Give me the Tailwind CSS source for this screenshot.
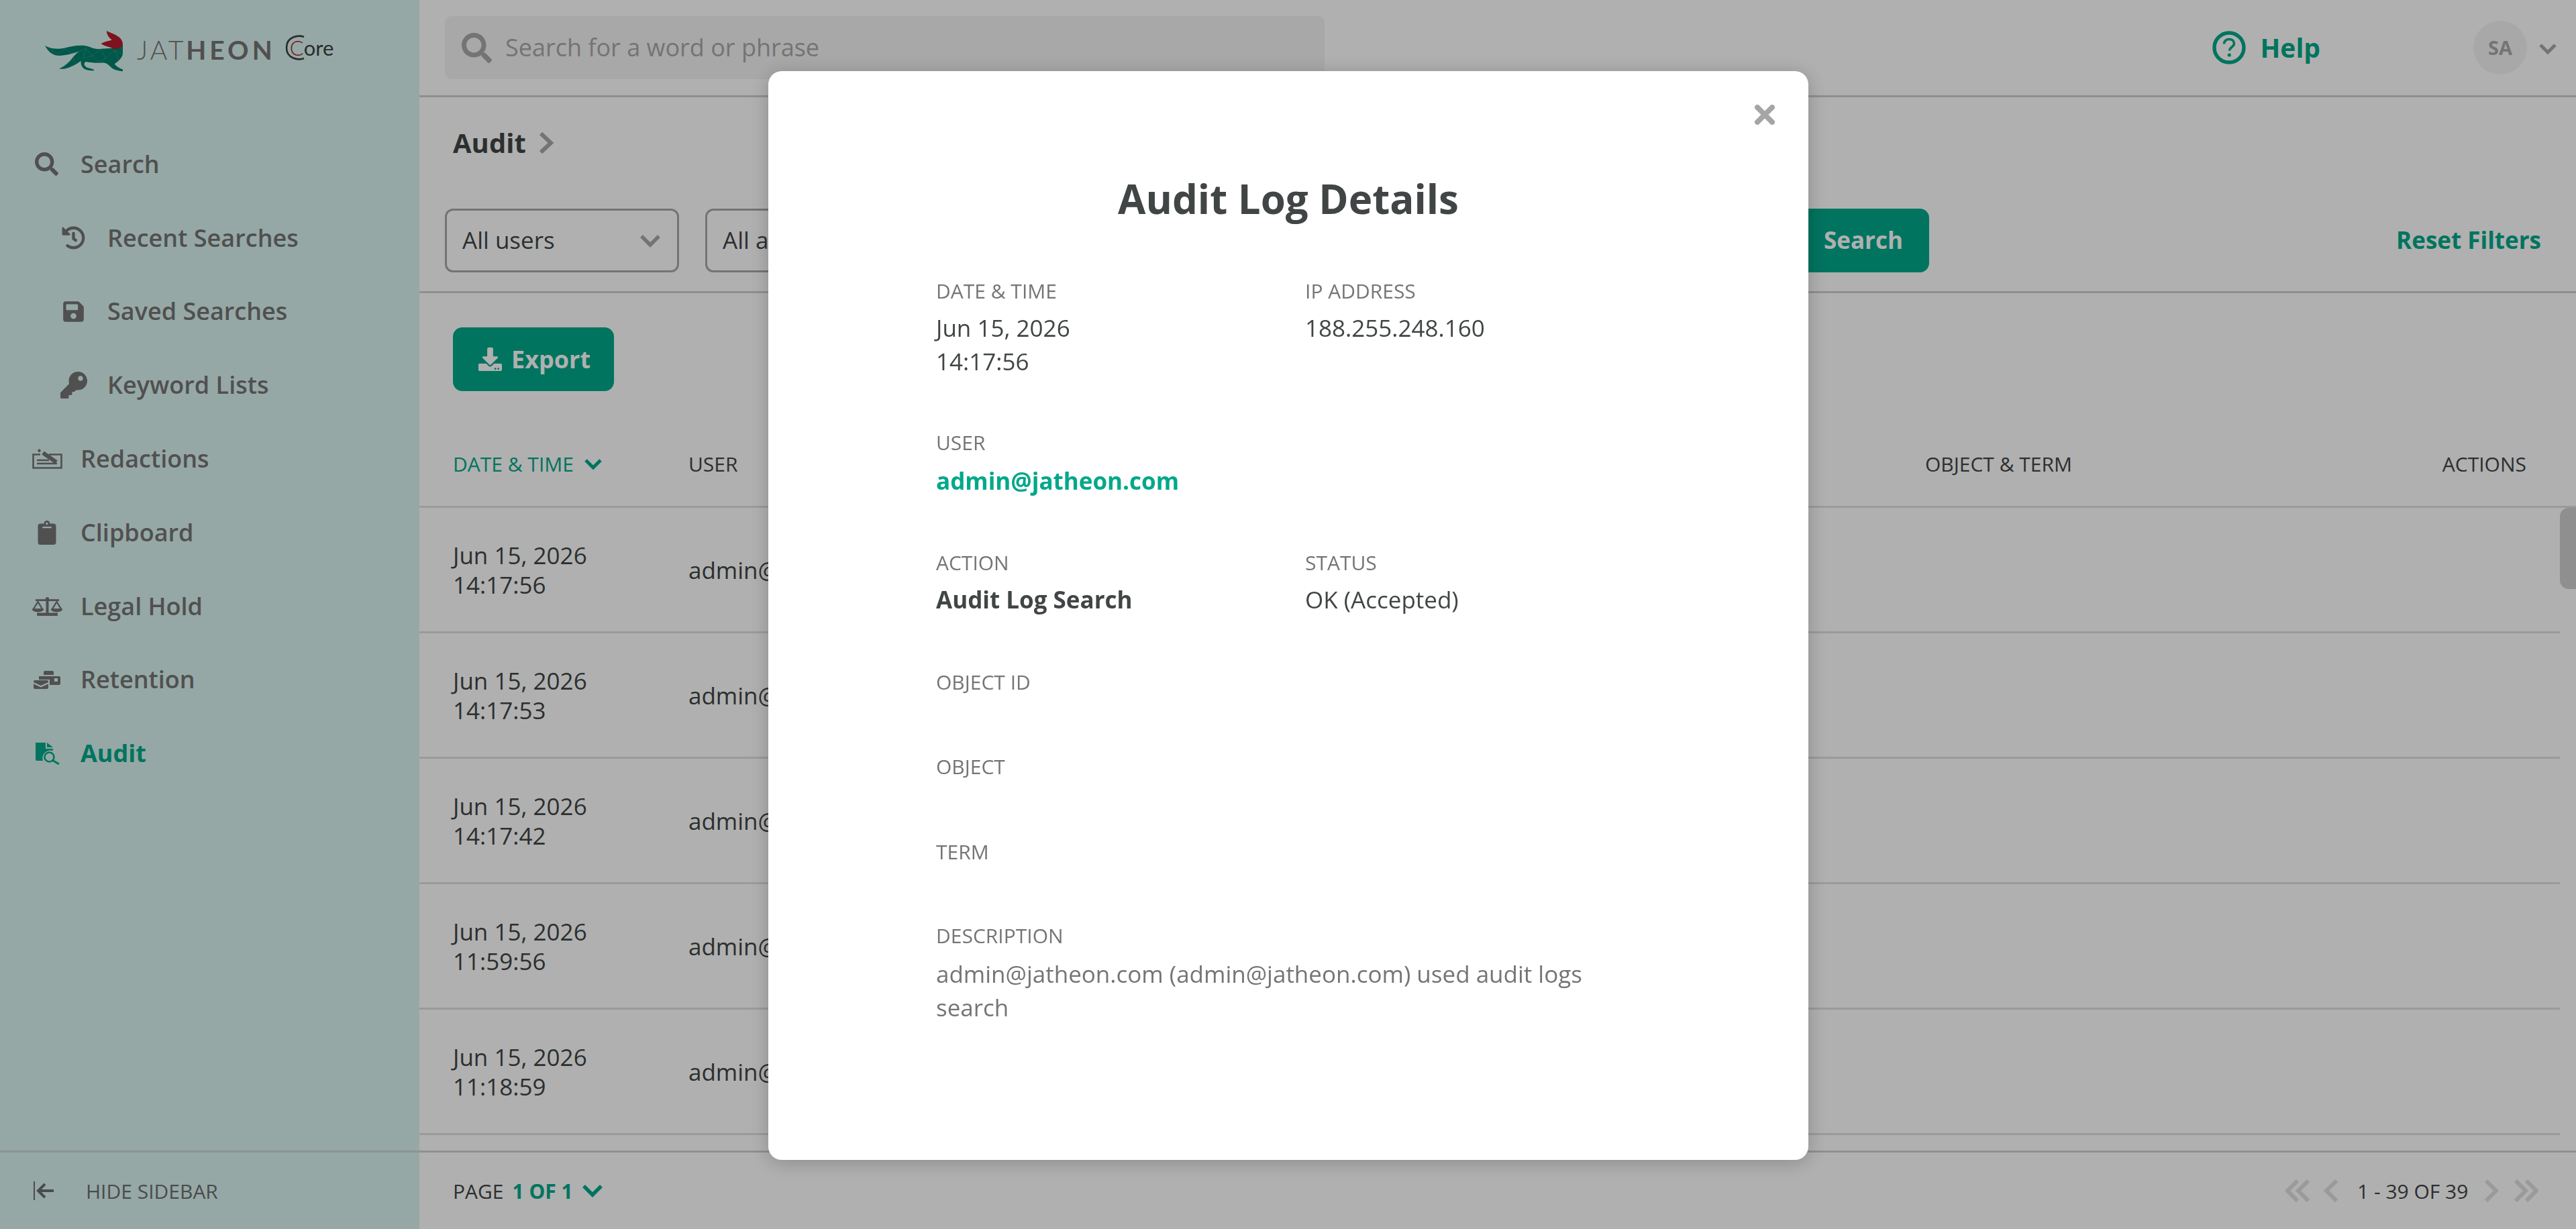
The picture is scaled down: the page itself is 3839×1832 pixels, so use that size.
<!DOCTYPE html>
<html lang="en">
<head>
    <meta charset="UTF-8">
    <title>Audit Log Details</title>
    <script src="https://cdn.jsdelivr.net/npm/@tailwindcss/browser@4"></script>
</head>
<body class="w-[3839px] h-[1832px] overflow-hidden bg-white font-['Open_Sans',sans-serif] text-[#414545]">
<div class="flex w-full h-full">
    <!-- Sidebar -->
    <aside class="w-[625px] h-full flex flex-col bg-[#daf3f0] text-[#757575]">
        <div class="h-[145px] pt-[46px] pl-[67px] flex items-start">
            <svg class="w-[117px] h-[61px]" viewBox="80 48 350 182">
                <path fill="#00806c" d="M80 113C95 125 130 132 165 125C195 118 225 110 260 114C285 118 300 132 330 128C365 124 400 128 427 112L427 150C424 170 405 185 390 195C400 208 415 215 427 220L427 228C405 226 385 222 372 208C362 196 350 188 335 190C310 192 280 188 262 185C250 192 255 205 270 212C285 215 298 218 300 224C285 226 265 224 252 215C240 205 240 190 240 182C225 195 205 205 185 212C170 217 155 218 142 217C160 210 180 195 195 178C205 165 215 152 232 140C200 150 165 160 135 158C110 155 90 135 80 113Z"/>
                <path fill="none" stroke="#8fc4b8" stroke-width="1.5" opacity=".55" d="M100 130L140 150L170 128L200 150L232 140L262 125L290 160L330 128L350 170L390 135L410 175M262 125L250 170L290 160L320 188M350 170L320 188M200 150L215 190M390 135L427 150"/>
                <path fill="#b51c2c" d="M355 48C375 58 400 65 415 80C425 90 428 105 427 112C420 122 400 132 385 128C378 120 350 118 330 105C345 95 370 92 378 88C365 78 355 65 355 48Z"/>
            </svg>
            <div class="ml-[20px] mt-[6px] flex items-baseline font-['Lato',sans-serif] text-[39px] leading-[44px] tracking-[4px] text-[#757575]">
                <span class="font-light">JAT</span><span class="font-bold tracking-[5px]">HEON</span>
            </div>
            <div class="relative ml-[14px] mt-[6px] w-[69px] h-[38px]">
                <svg class="absolute left-0 top-[0px] w-[30px] h-[38px]" viewBox="0 0 30 38"><path d="M28 3C20 0 2 2 2 19C2 36 20 38 28 35" fill="none" stroke="#3a4140" stroke-width="2.6"/></svg>
                <span class="absolute left-[7px] top-[-1px] font-['Lato',sans-serif] text-[31px] leading-[40px] text-[#3a4140]"><span class="text-[#b51c2c] font-light">C</span>ore</span>
            </div>
        </div>
        <nav class="flex-1 pt-[45px] text-[36px] font-semibold">
            <a class="h-[109.8px] flex items-center pl-[52px] gap-[33px]">
                <svg class="w-[35px] h-[35px]" viewBox="0 0 512 512" fill="currentColor"><path d="M505 442.7L405.3 343c-4.5-4.5-10.6-7-17-7H372c27.6-35.3 44-79.7 44-128C416 93.1 322.9 0 208 0S0 93.1 0 208s93.1 208 208 208c48.3 0 92.7-16.4 128-44v16.3c0 6.4 2.5 12.5 7 17l99.7 99.7c9.4 9.4 24.6 9.4 33.9 0l28.3-28.3c9.4-9.4 9.4-24.6.1-34zM208 336c-70.7 0-128-57.2-128-128 0-70.7 57.2-128 128-128 70.7 0 128 57.2 128 128 0 70.7-57.2 128-128 128z"/></svg>
                <span>Search</span>
            </a>
            <a class="h-[109.8px] flex items-center pl-[92px] gap-[33px]">
                <svg class="w-[35px] h-[35px]" viewBox="0 0 512 512" fill="currentColor"><path d="M504 255.531c.253 136.64-111.18 248.372-247.82 248.468-59.015.042-113.223-20.53-155.822-54.911-11.077-8.94-11.905-25.541-1.839-35.607l11.267-11.267c8.609-8.609 22.353-9.551 31.891-1.984C173.062 425.135 212.781 440 256 440c101.705 0 184-82.311 184-184 0-101.705-82.311-184-184-184-48.814 0-93.149 18.969-126.068 49.932l50.754 50.754c10.08 10.08 2.941 27.314-11.313 27.314H24c-8.837 0-16-7.163-16-16V38.627c0-14.254 17.234-21.393 27.314-11.314l49.372 49.372C129.209 34.136 189.552 8 256 8c136.81 0 247.747 110.78 248 247.531zm-180.912 78.784l9.823-12.63c8.138-10.463 6.253-25.542-4.21-33.679L288 256.349V152c0-13.255-10.745-24-24-24h-16c-13.255 0-24 10.745-24 24v135.651l65.409 50.874c10.463 8.137 25.541 6.253 33.679-4.21z"/></svg>
                <span>Recent Searches</span>
            </a>
            <a class="h-[109.8px] flex items-center pl-[92px] gap-[33px]">
                <svg class="w-[35px] h-[35px]" viewBox="0 0 448 512" fill="currentColor"><path d="M433.941 129.941l-83.882-83.882A48 48 0 0 0 316.118 32H48C21.49 32 0 53.49 0 80v352c0 26.51 21.49 48 48 48h352c26.51 0 48-21.49 48-48V163.882a48 48 0 0 0-14.059-33.941zM224 416c-35.346 0-64-28.654-64-64 0-35.346 28.654-64 64-64s64 28.654 64 64c0 35.346-28.654 64-64 64zm96-304.52V212c0 6.627-5.373 12-12 12H76c-6.627 0-12-5.373-12-12V108c0-6.627 5.373-12 12-12h228.52c3.183 0 6.235 1.264 8.485 3.515l3.48 3.48A11.996 11.996 0 0 1 320 111.48z"/></svg>
                <span>Saved Searches</span>
            </a>
            <a class="h-[109.8px] flex items-center pl-[90px] gap-[30px]">
                <svg class="w-[40px] h-[40px]" viewBox="0 0 512 512" fill="currentColor"><path d="M512 176.001C512 273.203 433.202 352 336 352c-11.22 0-22.19-1.062-32.827-3.069l-24.012 27.014A23.999 23.999 0 0 1 261.223 384H224v40c0 13.255-10.745 24-24 24h-40v40c0 13.255-10.745 24-24 24H24c-13.255 0-24-10.745-24-24v-78.059c0-6.365 2.529-12.47 7.029-16.971l161.802-161.802C163.108 213.814 160 195.271 160 176 160 78.798 238.797.001 335.999 0 433.488-.001 512 78.511 512 176.001zM336 128c0 26.51 21.49 48 48 48s48-21.49 48-48-21.49-48-48-48-48 21.49-48 48z"/></svg>
                <span>Keyword Lists</span>
            </a>
            <a class="h-[109.8px] flex items-center pl-[48px] gap-[27px]">
                <svg class="w-[45px] h-[30px]" viewBox="0 0 45 30" fill="none" stroke="currentColor"><path d="M12 8.5H1.5V28.5H43.5V8.5H25" stroke-width="2.6"/><path d="M16 6L36 20" stroke-width="6"/><path d="M9 4L12 1.5" stroke-width="4"/><path d="M7 17H25M7 22H37" stroke-width="2.4"/></svg>
                <span>Redactions</span>
            </a>
            <a class="h-[109.8px] flex items-center pl-[55px] gap-[35px]">
                <svg class="w-[30px] h-[36px]" viewBox="0 0 384 512" fill="currentColor"><path d="M384 112v352c0 26.51-21.49 48-48 48H48c-26.51 0-48-21.49-48-48V112c0-26.51 21.49-48 48-48h80c0-35.29 28.71-64 64-64s64 28.71 64 64h80c26.51 0 48 21.49 48 48zM192 40c-13.255 0-24 10.745-24 24s10.745 24 24 24 24-10.745 24-24-10.745-24-24-24m96 114v-20a6 6 0 0 0-6-6H102a6 6 0 0 0-6 6v20a6 6 0 0 0 6 6h180a6 6 0 0 0 6-6z"/></svg>
                <span>Clipboard</span>
            </a>
            <a class="h-[109.8px] flex items-center pl-[48px] gap-[27px]">
                <svg class="w-[45px] h-[28px]" viewBox="0 0 45 28" fill="currentColor"><circle cx="22.5" cy="2.6" r="2.6"/><rect x="5" y="3.2" width="35" height="2.8"/><rect x="20.5" y="3" width="4" height="22"/><rect x="7" y="23.6" width="31" height="4.4" rx="1"/><path d="M8.5 7L1.5 18.5H15.5Z M36.5 7L29.5 18.5H43.5Z" fill="none" stroke="currentColor" stroke-width="2.4"/><path d="M0 17.5H17C17 24 0 24 0 17.5Z M28 17.5H45C45 24 28 24 28 17.5Z"/></svg>
                <span>Legal Hold</span>
            </a>
            <a class="h-[109.8px] flex items-center pl-[50px] gap-[30px]">
                <svg class="w-[40px] h-[27px]" viewBox="0 0 40 27" fill="currentColor"><path d="M15 2a2 2 0 0 1 2-2H28a2 2 0 0 1 2 2V6H15Z"/><path d="M8 8H38a2 2 0 0 1 2 2V19a2 2 0 0 1-2 2H24V13H8ZM31 11v5h5v-5Z" fill-rule="evenodd"/><path d="M0 16a2 2 0 0 1 2-2H20a2 2 0 0 1 2 2V17L11 22 0 17Z"/><path d="M0 19.5L11 24.5 22 19.5V25a2 2 0 0 1-2 2H2a2 2 0 0 1-2-2Z"/></svg>
                <span>Retention</span>
            </a>
            <a class="h-[109.8px] flex items-center pl-[53px] gap-[31px] text-[#00a88a] font-bold">
                <svg class="w-[36px] h-[33px]" viewBox="0 0 36 33" fill="currentColor"><path d="M0 0H15V9H26V12A12 12 0 0 0 11 27H2a2 2 0 0 1-2-2Z"/><path d="M17 0L26 7H17Z"/><circle cx="20.5" cy="21.5" r="7" fill="none" stroke="currentColor" stroke-width="2.6"/><path d="M25.5 26.5L35 32" stroke="currentColor" stroke-width="3"/></svg>
                <span>Audit</span>
            </a>
        </nav>
        <div class="h-[117px] border-t-[3px] border-[#c8d8d6] flex items-center pl-[50px] text-[30px] font-normal text-[#6a6f70]">
            <svg class="w-[30px] h-[30px] mr-[48px]" viewBox="0 0 30 30" fill="none" stroke="currentColor"><path d="M1 1V29" stroke-width="2"/><path d="M8 15H30" stroke-width="4"/><path d="M17 5L7 15L17 25" stroke-width="4"/></svg>
            <span>HIDE SIDEBAR</span>
        </div>
    </aside>

    <!-- Main -->
    <main class="flex-1 min-w-0 h-full flex flex-col">
        <header class="h-[145px] shrink-0 border-b-[3px] border-[#cfcfcf] flex items-center pl-[38px]">
            <div class="w-[1311px] h-[94px] rounded-[10px] bg-[#f4f4f4] flex items-center pl-[25px] text-[36px] text-[#a8a8a8]">
                <svg class="w-[45px] h-[45px] mr-[20px]" viewBox="0 0 512 512" fill="#a8a8a8"><path d="M505 442.7L405.3 343c-4.5-4.5-10.6-7-17-7H372c27.6-35.3 44-79.7 44-128C416 93.1 322.9 0 208 0S0 93.1 0 208s93.1 208 208 208c48.3 0 92.7-16.4 128-44v16.3c0 6.4 2.5 12.5 7 17l99.7 99.7c9.4 9.4 24.6 9.4 33.9 0l28.3-28.3c9.4-9.4 9.4-24.6.1-34zM208 336c-70.7 0-128-57.2-128-128 0-70.7 57.2-128 128-128 70.7 0 128 57.2 128 128 0 70.7-57.2 128-128 128z"/></svg>
                <span>Search for a word or phrase</span>
            </div>
            <div class="ml-auto flex items-center">
                <svg class="w-[50px] h-[50px]" viewBox="0 0 50 50" fill="none"><circle cx="25" cy="25" r="22" stroke="#00a88a" stroke-width="5.4"/><path d="M17.5 19.5C17.5 15 21 12.5 25 12.5C29.5 12.5 32.5 15 32.5 18.8C32.5 24 26 24 25.5 29.5" stroke="#00a88a" stroke-width="3.6"/><circle cx="25.3" cy="36" r="2.6" fill="#00a88a"/></svg>
                <span class="ml-[22px] text-[39px] font-bold text-[#00a88a]">Help</span>
                <div class="ml-[228px] w-[80px] h-[80px] rounded-full bg-[#f4f4f4] flex items-center justify-center text-[29px] font-bold text-[#a8a8a8]">SA</div>
                <svg class="ml-[18px] mr-[29px] mt-[4px] w-[26px] h-[18px]" viewBox="0 0 26 18" fill="none" stroke="#a8a8a8" stroke-width="5"><path d="M2 3L13 14L24 3"/></svg>
            </div>
        </header>

        <section class="h-[292px] shrink-0 border-b-[3px] border-[#cfcfcf] pl-[38px] pr-[52px]">
            <div class="h-[166px] flex items-center pl-[12px] pb-[31px]">
                <span class="text-[40px] font-bold text-[#414545]">Audit</span>
                <svg class="ml-[18px] w-[24px] h-[34px]" viewBox="0 0 24 34" fill="none" stroke="#a8a8a8" stroke-width="6"><path d="M4 3L19 17L4 31"/></svg>
            </div>
            <div class="flex items-center">
                <div class="w-[349px] h-[95px] rounded-[12px] border-[3px] border-[#a8a8a8] flex items-center pl-[23px] text-[35px]">
                    All users
                    <svg class="ml-auto mr-[25px] w-[30px] h-[20px]" viewBox="0 0 30 20" fill="none" stroke="#a8a8a8" stroke-width="5.5"><path d="M2 3L15 16L28 3"/></svg>
                </div>
                <div class="ml-[39px] w-[349px] h-[95px] rounded-[12px] border-[3px] border-[#a8a8a8] flex items-center pl-[23px] text-[35px]">All actions</div>
                <button class="ml-[1175px] w-[300px] h-[95px] rounded-[14px] bg-[#00a88a] text-white text-[35px] font-bold text-right pr-[39px]">Search</button>
                <span class="ml-auto text-[35px] font-bold text-[#00a88a]">Reset Filters</span>
            </div>
        </section>

        <div class="h-[320px] shrink-0 flex flex-col">
            <div class="h-[146px] pt-[51px] pl-[50px]">
                <button class="w-[240px] h-[95px] rounded-[14px] bg-[#00a88a] text-white flex items-center pl-[38px] text-[36px] font-bold">
                    <svg class="w-[35px] h-[35px] mr-[14px]" viewBox="0 0 512 512" fill="currentColor"><path d="M216 0h80c13.3 0 24 10.7 24 24v168h87.7c17.8 0 26.7 21.5 14.1 34.1L269.7 378.3c-7.5 7.5-19.8 7.5-27.3 0L90.1 226.1c-12.6-12.6-3.7-34.1 14.1-34.1H192V24c0-13.3 10.7-24 24-24zm296 376v112c0 13.3-10.7 24-24 24H24c-13.3 0-24-10.7-24-24V376c0-13.3 10.7-24 24-24h146.7l49 49c20.1 20.1 52.5 20.1 72.6 0l49-49H488c13.3 0 24 10.7 24 24zm-124 88c0-11-9-20-20-20s-20 9-20 20 9 20 20 20 20-9 20-20zm64 0c0-11-9-20-20-20s-20 9-20 20 9 20 20 20 20-9 20-20z"/></svg>
                    Export
                </button>
            </div>
            <div class="flex-1 flex items-center text-[30px] text-[#414545] border-b-[3px] border-[#e0e0e0] pt-[46px] pl-[50px]">
                <div class="w-[351px] flex items-center text-[#00a88a]">DATE &amp; TIME
                    <svg class="ml-[16px] w-[26px] h-[17px]" viewBox="0 0 26 17" fill="none" stroke="currentColor" stroke-width="5"><path d="M2 3L13 14L24 3"/></svg>
                </div>
                <div class="w-[1843px]">USER</div>
                <div>OBJECT &amp; TERM</div>
                <div class="ml-auto mr-[74px]">ACTIONS</div>
            </div>
        </div>

        <div class="relative flex-1 min-h-0 overflow-hidden text-[35px]">
            <div class="absolute right-0 top-0 w-[24px] h-[121px] rounded-l-[13px] bg-[#cfcfcf]"></div>
            <div class="mr-[24px] pl-[50px] pt-[2px] h-[187px] border-b-[3px] border-[#e0e0e0] flex items-center leading-[44px]">
                <div class="w-[351px]">Jun 15, 2026<br>14:17:56</div><div>admin@jatheon.com</div>
            </div>
            <div class="mr-[24px] pl-[50px] pt-[2px] h-[187px] border-b-[3px] border-[#e0e0e0] flex items-center leading-[44px]">
                <div class="w-[351px]">Jun 15, 2026<br>14:17:53</div><div>admin@jatheon.com</div>
            </div>
            <div class="mr-[24px] pl-[50px] pt-[2px] h-[187px] border-b-[3px] border-[#e0e0e0] flex items-center leading-[44px]">
                <div class="w-[351px]">Jun 15, 2026<br>14:17:42</div><div>admin@jatheon.com</div>
            </div>
            <div class="mr-[24px] pl-[50px] pt-[2px] h-[187px] border-b-[3px] border-[#e0e0e0] flex items-center leading-[44px]">
                <div class="w-[351px]">Jun 15, 2026<br>11:59:56</div><div>admin@jatheon.com</div>
            </div>
            <div class="mr-[24px] pl-[50px] pt-[2px] h-[187px] border-b-[3px] border-[#e0e0e0] flex items-center leading-[44px]">
                <div class="w-[351px]">Jun 15, 2026<br>11:18:59</div><div>admin@jatheon.com</div>
            </div>
        </div>

        <footer class="h-[117px] shrink-0 border-t-[3px] border-[#cfcfcf] flex items-center pl-[50px] text-[30px] text-[#414545]">
            <span>PAGE</span>
            <span class="ml-[13px] font-bold text-[#00a88a]">1 OF 1</span>
            <svg class="ml-[14px] w-[30px] h-[20px]" viewBox="0 0 30 20" fill="none" stroke="#00a88a" stroke-width="5.5"><path d="M2 3L15 16L28 3"/></svg>
            <div class="ml-auto mr-[56px] flex items-center">
                <svg class="w-[36px] h-[34px]" viewBox="0 0 36 34" fill="none" stroke="#e0e0e0" stroke-width="6"><path d="M18 2L3 17L18 32M34 2L19 17L34 32"/></svg>
                <svg class="ml-[21px] w-[21px] h-[34px]" viewBox="0 0 21 34" fill="none" stroke="#e0e0e0" stroke-width="6"><path d="M19 2L4 17L19 32"/></svg>
                <span class="ml-[29px] w-[163px] whitespace-nowrap">1 - 39 OF 39</span>
                <svg class="ml-[27px] w-[21px] h-[34px]" viewBox="0 0 21 34" fill="none" stroke="#e0e0e0" stroke-width="6"><path d="M2 2L17 17L2 32"/></svg>
                <svg class="ml-[23px] w-[36px] h-[34px]" viewBox="0 0 36 34" fill="none" stroke="#e0e0e0" stroke-width="6"><path d="M2 2L17 17L2 32M18 2L33 17L18 32"/></svg>
            </div>
        </footer>
    </main>
</div>

<!-- Overlay + modal -->
<div class="fixed inset-0 bg-black/31"></div>
<div class="fixed left-[1145px] top-[106px] w-[1550px] h-[1623px] rounded-[20px] bg-white shadow-[0_4px_30px_rgba(0,0,0,0.22)] text-[#414545]">
    <svg class="absolute left-[1470px] top-[50px] w-[30px] h-[30px]" viewBox="0 0 30 30" fill="none" stroke="#a5a5a5" stroke-width="8" stroke-linecap="round"><path d="M4 4L26 26M26 4L4 26"/></svg>
    <h2 class="pt-[148px] text-center text-[60px] leading-[84px] font-bold">Audit Log Details</h2>
    <div class="absolute left-[250px] top-[308px] w-[1000px] text-[35px] leading-[50px]">
        <div class="grid grid-cols-[550px_1fr]">
            <div>
                <div class="text-[30px] leading-[40px] text-[#757575]">DATE &amp; TIME</div>
                <div class="mt-[10px]">Jun 15, 2026<br>14:17:56</div>
            </div>
            <div>
                <div class="text-[30px] leading-[40px] text-[#757575]">IP ADDRESS</div>
                <div class="mt-[10px]">188.255.248.160</div>
            </div>
        </div>
        <div class="mt-[76px] text-[30px] leading-[40px] text-[#757575]">USER</div>
        <div class="mt-[12px] font-bold text-[#00a88a]">admin@jatheon.com</div>
        <div class="mt-[77px] grid grid-cols-[550px_1fr]">
            <div>
                <div class="text-[30px] leading-[40px] text-[#757575]">ACTION</div>
                <div class="mt-[10px] font-bold">Audit Log Search</div>
            </div>
            <div>
                <div class="text-[30px] leading-[40px] text-[#757575]">STATUS</div>
                <div class="mt-[10px]">OK (Accepted)</div>
            </div>
        </div>
        <div class="mt-[78px] text-[30px] leading-[40px] text-[#757575]">OBJECT ID</div>
        <div class="mt-[86px] text-[30px] leading-[40px] text-[#757575]">OBJECT</div>
        <div class="mt-[87px] text-[30px] leading-[40px] text-[#757575]">TERM</div>
        <div class="mt-[85px] text-[30px] leading-[40px] text-[#757575]">DESCRIPTION</div>
        <div class="mt-[12px] text-[#757575]">admin@jatheon.com (admin@jatheon.com) used audit logs search</div>
    </div>
</div>
</body>
</html>
